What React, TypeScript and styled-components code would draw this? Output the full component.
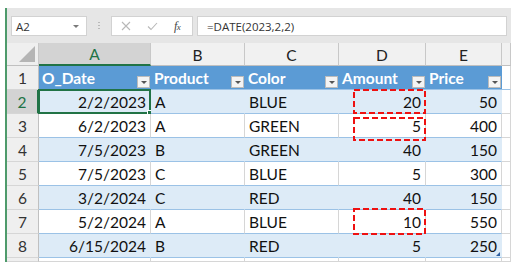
import React from "react";
import styled, { createGlobalStyle, css } from "styled-components";

const GRID = "32px 112px 94px 94px 87px 76px 1fr";
const GREEN = "#217346";

interface Mark {
  top: number;
  height: number;
}

interface RowData {
  date: string;
  product: string;
  color: string;
  amount: string;
  price: string;
  mark?: Mark;
}

const rows: RowData[] = [
  { date: "2/2/2023", product: "A", color: "BLUE", amount: "20", price: "50", mark: { top: -1, height: 25 } },
  { date: "6/2/2023", product: "A", color: "GREEN", amount: "5", price: "400", mark: { top: 3, height: 24 } },
  { date: "7/5/2023", product: "B", color: "GREEN", amount: "40", price: "150" },
  { date: "7/5/2023", product: "C", color: "BLUE", amount: "5", price: "300" },
  { date: "3/2/2024", product: "C", color: "RED", amount: "40", price: "150" },
  { date: "5/2/2024", product: "A", color: "BLUE", amount: "10", price: "550", mark: { top: -2, height: 27 } },
  { date: "6/15/2024", product: "B", color: "RED", amount: "5", price: "250" },
];

const headers = ["O_Date", "Product", "Color", "Amount", "Price"];
const letters = ["A", "B", "C", "D", "E"];

const GlobalStyle = createGlobalStyle`
  html, body { margin: 0; padding: 0; background: #fff; }
  body { font-family: Lato, "Liberation Sans", sans-serif; }
`;

const Window = styled.div`
  margin: 8px 0 0 5px;
  height: 254px;
  border-left: 2px solid #4e9a6b;
  display: flex;
  flex-direction: column;
  overflow: hidden;
`;

const FormulaBar = styled.div`
  height: 35px;
  flex: none;
  background: #e6e6e6;
  display: flex;
  align-items: flex-start;
  padding: 8px 4px 0 4px;
  box-sizing: border-box;
`;

const Box = styled.div<{ $w?: number; $ml?: number }>`
  height: 20px;
  box-sizing: border-box;
  background: #fff;
  border: 1px solid #d2d2d2;
  display: flex;
  align-items: center;
  margin-left: ${(p) => p.$ml ?? 0}px;
  font-family: "Open Sans", "Liberation Sans", sans-serif;
  font-size: 11.5px;
  color: #333;
  ${(p) => (p.$w ? css`width: ${p.$w}px; flex: none;` : css`flex: 1;`)}
`;

const NameText = styled.span`
  padding-left: 4px;
  flex: 1;
`;

const Caret = styled.span`
  width: 0;
  height: 0;
  border-left: 3px solid transparent;
  border-right: 3px solid transparent;
  border-top: 3px solid #7a7a7a;
  margin-right: 7px;
`;

const Dots = styled.div`
  width: 2px;
  height: 20px;
  margin: 0 11px;
  background: radial-gradient(circle, #b9b9b9 0.8px, transparent 1px) 0 5px / 2px 3px repeat-y;
  clip-path: inset(6px 0 6px 0);
`;

const IconSlot = styled.span<{ $ml: number }>`
  margin-left: ${(p) => p.$ml}px;
  display: flex;
  align-items: center;
`;

const Fx = styled.span`
  font-family: "Liberation Serif", serif;
  font-style: italic;
  font-size: 12px;
  color: #444;
  letter-spacing: -0.5px;
  & > small {
    font-size: 9px;
  }
`;

const FormulaText = styled.span`
  padding-left: 9px;
`;

const Grid = styled.div`
  flex: 1;
  display: flex;
  flex-direction: column;
  font-size: 15.5px;
`;

const Row = styled.div<{ $h?: number }>`
  display: grid;
  grid-template-columns: ${GRID};
  flex: none;
  height: ${(p) => (p.$h ? `${p.$h}px` : "auto")};
  &:last-child {
    flex: 1;
  }
`;

const Corner = styled.div`
  background: #efefef;
  border-right: 1px solid #c8c8c8;
  border-bottom: 1px solid #c0c0c0;
  box-sizing: border-box;
  display: flex;
  align-items: flex-end;
  justify-content: flex-end;
  padding: 0 3px 3px 0;
`;

const Triangle = styled.span`
  width: 0;
  height: 0;
  border-left: 16px solid transparent;
  border-bottom: 16px solid #b5b5b5;
`;

const ColHead = styled.div<{ $sel?: boolean }>`
  box-sizing: border-box;
  display: flex;
  align-items: center;
  justify-content: center;
  background: ${(p) => (p.$sel ? "#d3d3d3" : "#f1f1f1")};
  color: ${(p) => (p.$sel ? GREEN : "#222")};
  border-right: 1px solid #c8c8c8;
  border-bottom: ${(p) => (p.$sel ? `2px solid ${GREEN}` : "1px solid #c0c0c0")};
  padding-top: 1px;
`;

const RowHead = styled.div<{ $sel?: boolean }>`
  box-sizing: border-box;
  display: flex;
  align-items: center;
  justify-content: center;
  background: ${(p) => (p.$sel ? "#d3d3d3" : "#efefef")};
  color: ${(p) => (p.$sel ? GREEN : "#333")};
  border-right: ${(p) => (p.$sel ? `2px solid ${GREEN}` : "1px solid #c0c0c0")};
  border-bottom: 1px solid #d6d6d6;
`;

const Cell = styled.div<{ $band?: boolean; $num?: boolean; $edge?: boolean }>`
  position: relative;
  box-sizing: border-box;
  display: flex;
  align-items: center;
  justify-content: ${(p) => (p.$num ? "flex-end" : "flex-start")};
  padding: 1px 4px 0 4px;
  color: #111;
  white-space: nowrap;
  background: ${(p) => (p.$band ? "#ddebf7" : "#fff")};
  border-right: 1px solid ${(p) => (p.$band ? "#ddebf7" : "#d6d6d6")};
  border-bottom: 1px solid ${(p) => (p.$edge ? "#d6d6d6" : "#9bc2e6")};
`;

const HeadCell = styled.div`
  box-sizing: border-box;
  display: flex;
  align-items: center;
  padding: 1px 1px 0 3px;
  background: #5b9bd5;
  color: #fff;
  font-weight: 700;
  border-bottom: 1px solid #9bc2e6;
  white-space: nowrap;
`;

const FilterButton = styled.span`
  margin: auto 0 1px auto;
  width: 13px;
  height: 12px;
  box-sizing: border-box;
  background: #f4f4f4;
  border: 1px solid #bcbcbc;
  display: flex;
  align-items: center;
  justify-content: center;
  &::after {
    content: "";
    border-left: 3px solid transparent;
    border-right: 3px solid transparent;
    border-top: 3px solid #555;
  }
`;

const Selection = styled.span`
  position: absolute;
  left: -1px;
  right: -1px;
  top: -1px;
  bottom: -1px;
  border: 2px solid ${GREEN};
  pointer-events: none;
  &::after {
    content: "";
    position: absolute;
    right: -4px;
    bottom: -4px;
    width: 4px;
    height: 4px;
    background: ${GREEN};
    border: 1px solid #fff;
  }
`;

const MarkBox = styled.svg<{ $top: number }>`
  position: absolute;
  left: 14px;
  top: ${(p) => p.$top}px;
  overflow: visible;
  z-index: 2;
`;

const ResizeHandle = styled.span`
  position: absolute;
  right: 1px;
  bottom: 1px;
  width: 0;
  height: 0;
  border-left: 4px solid transparent;
  border-bottom: 4px solid #2f5fa0;
`;

const RedMark: React.FC<Mark> = ({ top, height }) => (
  <MarkBox $top={top} width={73} height={height}>
    <rect x={1} y={1} width={71} height={height - 2} fill="none" stroke="#ee1111" strokeWidth={2} strokeDasharray="6 3" />
  </MarkBox>
);

const App: React.FC = () => {
  return (
    <>
      <GlobalStyle />
      <Window>
        <FormulaBar>
          <Box $w={76}>
            <NameText>A2</NameText>
            <Caret />
          </Box>
          <Dots />
          <Box $w={82}>
            <IconSlot $ml={9}>
              <svg width="10" height="10" viewBox="0 0 10 10">
                <path d="M1 1 L9 9 M9 1 L1 9" stroke="#b8b8b8" strokeWidth="1.1" fill="none" />
              </svg>
            </IconSlot>
            <IconSlot $ml={16}>
              <svg width="11" height="9" viewBox="0 0 11 9">
                <path d="M1 4.5 L4 7.5 L10 1" stroke="#b8b8b8" strokeWidth="1.1" fill="none" />
              </svg>
            </IconSlot>
            <IconSlot $ml={16}>
              <Fx>
                f<small>x</small>
              </Fx>
            </IconSlot>
          </Box>
          <Box $ml={4}>
            <FormulaText>=DATE(2023,2,2)</FormulaText>
          </Box>
        </FormulaBar>
        <Grid>
          <Row $h={23}>
            <Corner>
              <Triangle />
            </Corner>
            {letters.map((l, i) => (
              <ColHead key={l} $sel={i === 0}>
                {l}
              </ColHead>
            ))}
            <ColHead />
          </Row>
          <Row $h={24}>
            <RowHead>1</RowHead>
            {headers.map((h) => (
              <HeadCell key={h}>
                {h}
                <FilterButton />
              </HeadCell>
            ))}
            <Cell />
          </Row>
          {rows.map((r, i) => {
            const band = i % 2 === 0;
            const last = i === rows.length - 1;
            return (
              <Row $h={24} key={i}>
                <RowHead $sel={i === 0}>{i + 2}</RowHead>
                <Cell $band={band} $num>
                  {r.date}
                  {i === 0 && <Selection />}
                </Cell>
                <Cell $band={band}>{r.product}</Cell>
                <Cell $band={band}>{r.color}</Cell>
                <Cell $band={band} $num>
                  {r.amount}
                  {r.mark && <RedMark top={r.mark.top} height={r.mark.height} />}
                </Cell>
                <Cell $band={band} $num>
                  {r.price}
                  {last && <ResizeHandle />}
                </Cell>
                <Cell $edge />
              </Row>
            );
          })}
          <Row>
            <RowHead />
            <Cell $edge />
            <Cell $edge />
            <Cell $edge />
            <Cell $edge />
            <Cell $edge />
            <Cell $edge />
          </Row>
        </Grid>
      </Window>
    </>
  );
};

export default App;
